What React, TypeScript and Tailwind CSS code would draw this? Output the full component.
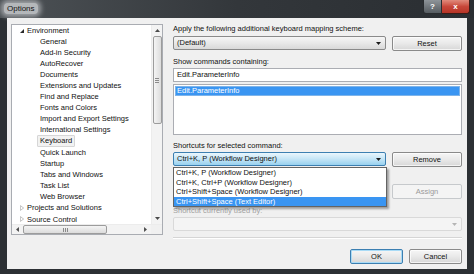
import React from 'react';

const treeItems: { label: string; level: 0 | 1; state?: 'open' | 'closed'; selected?: boolean }[] = [
  { label: 'Environment', level: 0, state: 'open' },
  { label: 'General', level: 1 },
  { label: 'Add-in Security', level: 1 },
  { label: 'AutoRecover', level: 1 },
  { label: 'Documents', level: 1 },
  { label: 'Extensions and Updates', level: 1 },
  { label: 'Find and Replace', level: 1 },
  { label: 'Fonts and Colors', level: 1 },
  { label: 'Import and Export Settings', level: 1 },
  { label: 'International Settings', level: 1 },
  { label: 'Keyboard', level: 1, selected: true },
  { label: 'Quick Launch', level: 1 },
  { label: 'Startup', level: 1 },
  { label: 'Tabs and Windows', level: 1 },
  { label: 'Task List', level: 1 },
  { label: 'Web Browser', level: 1 },
  { label: 'Projects and Solutions', level: 0, state: 'closed' },
  { label: 'Source Control', level: 0, state: 'closed' },
];

const shortcuts = [
  'Ctrl+K, P (Workflow Designer)',
  'Ctrl+K, Ctrl+P (Workflow Designer)',
  'Ctrl+Shift+Space (Workflow Designer)',
  'Ctrl+Shift+Space (Text Editor)',
];

const Arrow = ({ dir, className }: { dir: 'up' | 'down' | 'left' | 'right'; className?: string }) => {
  const pts = {
    up: '0,4 3.5,0 7,4',
    down: '0,0 7,0 3.5,4',
    left: '4,0 4,7 0,3.5',
    right: '0,0 0,7 4,3.5',
  }[dir];
  const vb = dir === 'up' || dir === 'down' ? '0 0 7 4' : '0 0 4 7';
  return (
    <svg viewBox={vb} className={className}>
      <polygon points={pts} fill="currentColor" />
    </svg>
  );
};

const Button = ({ label, kind = 'normal' }: { label: string; kind?: 'normal' | 'disabled' | 'default' }) => {
  if (kind === 'disabled') {
    return (
      <div className="flex h-[15px] w-[70px] items-center justify-center rounded-[2px] border border-[#c6c9cc] bg-[#f4f4f4] text-[#9a9a9a]">
        {label}
      </div>
    );
  }
  return (
    <div
      className={`flex h-[15px] items-center justify-center rounded-[2px] border bg-gradient-to-b from-[#f6f6f6] via-[#e9e9e9] to-[#d7d7d7] ${
        kind === 'default'
          ? 'border-[#3c7fb1] shadow-[inset_0_0_0_1px_#a9dbf6]'
          : 'border-[#8a8a8a] shadow-[inset_0_0_0_1px_rgba(255,255,255,0.7)]'
      }`}
    >
      {label}
    </div>
  );
};

export default function App() {
  return (
    <div className="flex h-[274px] w-[474px] flex-col overflow-hidden bg-[#2c3034] font-['Liberation_Sans',Arial,sans-serif] text-[7.5px] text-[#111]">
      {/* Title bar */}
      <div className="flex h-[18px] shrink-0 items-start bg-gradient-to-r from-[#4d5256] via-[#33373b] to-[#2a2e32]">
        <div className="ml-[4px] mt-[3px] rounded-[4px] bg-[#b4b7ba] px-[3px] text-[8px] leading-[11px] text-[#111] shadow-[0_0_5px_3px_rgba(180,183,186,0.8)]">
          Options
        </div>
        <div className="ml-auto mr-[4px] flex h-[14px]">
          <div className="flex w-[19px] items-center justify-center rounded-bl-[3px] border border-t-0 border-[#2a2d30] bg-gradient-to-b from-[#8e9499] to-[#565c61] text-[8px] font-bold text-white">
            ?
          </div>
          <div className="flex w-[28px] items-center justify-center rounded-br-[3px] border border-l-0 border-t-0 border-[#3a1c18] bg-gradient-to-b from-[#e08a7c] via-[#c8473a] to-[#b63426] text-[8px] font-bold text-white">
            x
          </div>
        </div>
      </div>

      {/* Body */}
      <div className="mx-[7px] mb-[5px] flex flex-1 flex-col bg-[#f0f0f0] pl-[4px] pr-[5px] pt-[6px]">
        <div className="flex gap-[10px]">
          {/* Tree */}
          <div className="flex h-[211px] w-[152px] flex-col border border-[#a9acb2] bg-white">
            <div className="flex min-h-0 flex-1">
              <div className="flex-1 overflow-hidden">
                {treeItems.map((item) => (
                  <div key={item.label} className="flex h-[11.1px] items-center whitespace-nowrap">
                    {item.level === 0 ? (
                      <>
                        <span className="flex w-[15px] justify-end pr-[3px]">
                          {item.state === 'open' ? (
                            <svg viewBox="0 0 5 5" className="h-[4px] w-[4px]">
                              <polygon points="5,0 5,5 0,5" fill="#2a2a2a" />
                            </svg>
                          ) : (
                            <svg viewBox="0 0 5 7" className="h-[6px] w-[4px]">
                              <polygon points="0.5,0.5 0.5,6.5 4.5,3.5" fill="none" stroke="#a0a0a0" strokeWidth="0.8" />
                            </svg>
                          )}
                        </span>
                        <span>{item.label}</span>
                      </>
                    ) : (
                      <span
                        className={`ml-[25px] px-[2px] leading-[10px] ${
                          item.selected ? 'rounded-[1px] border border-[#d6d6d6] bg-[#f2f2f2]' : 'border border-transparent'
                        }`}
                      >
                        {item.label}
                      </span>
                    )}
                  </div>
                ))}
              </div>
              {/* vertical scrollbar */}
              <div className="flex w-[11px] flex-col items-center border-l border-[#ececec] bg-[#f3f3f3]">
                <div className="flex h-[11px] items-center justify-center">
                  <Arrow dir="up" className="h-[3px] w-[5px] text-[#4a4a4a]" />
                </div>
                <div className="flex h-[88px] w-[9px] items-center justify-center rounded-[2px] border border-[#9c9c9c] bg-gradient-to-r from-[#f4f4f4] to-[#dcdcdc]">
                  <div className="flex flex-col gap-[1px]">
                    <div className="h-px w-[4px] bg-[#8a8a8a]" />
                    <div className="h-px w-[4px] bg-[#8a8a8a]" />
                    <div className="h-px w-[4px] bg-[#8a8a8a]" />
                  </div>
                </div>
                <div className="flex-1" />
                <div className="flex h-[11px] items-center justify-center">
                  <Arrow dir="down" className="h-[3px] w-[5px] text-[#4a4a4a]" />
                </div>
              </div>
            </div>
            {/* horizontal scrollbar */}
            <div className="flex h-[10px] items-center border-t border-[#ececec] bg-[#f3f3f3]">
              <div className="flex w-[11px] items-center justify-center">
                <Arrow dir="left" className="h-[5px] w-[3px] text-[#4a4a4a]" />
              </div>
              <div className="flex h-[9px] w-[84px] items-center justify-center rounded-[2px] border border-[#9c9c9c] bg-gradient-to-b from-[#f4f4f4] to-[#dcdcdc]">
                <div className="flex gap-[1px]">
                  <div className="h-[4px] w-px bg-[#8a8a8a]" />
                  <div className="h-[4px] w-px bg-[#8a8a8a]" />
                  <div className="h-[4px] w-px bg-[#8a8a8a]" />
                </div>
              </div>
              <div className="flex-1" />
              <div className="flex w-[11px] items-center justify-center">
                <Arrow dir="right" className="h-[5px] w-[3px] text-[#4a4a4a]" />
              </div>
              <div className="h-full w-[11px] bg-[#f0f0f0]" />
            </div>
          </div>

          {/* Right panel */}
          <div className="flex w-[289px] flex-col">
            <div className="h-[10px] leading-[10px]">Apply the following additional keyboard mapping scheme:</div>
            <div className="mt-[2px] flex gap-[6px]">
              <div className="flex h-[14px] flex-1 items-center rounded-[2px] border border-[#8a8a8a] bg-gradient-to-b from-[#f6f6f6] via-[#e9e9e9] to-[#d9d9d9] pl-[3px] pr-[4px]">
                <span className="flex-1">(Default)</span>
                <Arrow dir="down" className="h-[3px] w-[5px] text-[#1a1a1a]" />
              </div>
              <div className="w-[70px]">
                <Button label="Reset" />
              </div>
            </div>

            <div className="mt-[6px] h-[10px] leading-[10px]">Show commands containing:</div>
            <div className="mt-px flex h-[14px] items-center border border-[#abadb3] bg-white pl-[3px]">Edit.ParameterInfo</div>
            <div className="mt-[2px] h-[51px] border border-[#abadb3] bg-white p-px">
              <div className="flex h-[10px] items-center border border-[#7eb4ea] bg-[#3a95f2] pl-[1px] text-white">
                Edit.ParameterInfo
              </div>
            </div>

            <div className="mt-[6px] h-[10px] leading-[10px]">Shortcuts for selected command:</div>
            <div className="relative mt-px flex gap-[6px]">
              <div className="flex h-[14px] flex-1 items-center rounded-[2px] border border-[#3c7fb1] bg-gradient-to-b from-[#eaf6fd] via-[#c4e5f6] to-[#98d1ef] pl-[3px] pr-[4px]">
                <span className="flex-1">Ctrl+K, P (Workflow Designer)</span>
                <Arrow dir="down" className="h-[3px] w-[5px] text-[#1a1a1a]" />
              </div>
              <div className="w-[70px]">
                <Button label="Remove" />
              </div>
              {/* open drop-down list */}
              <div className="absolute left-0 top-[15px] z-10 w-[214px] border border-[#646464] bg-white shadow-[2px_2px_2px_rgba(0,0,0,0.35)]">
                {shortcuts.map((s, i) => (
                  <div
                    key={s}
                    className={`flex h-[9.5px] items-center pl-[2px] ${i === 3 ? 'bg-[#3a95f2] text-white' : ''}`}
                  >
                    {s}
                  </div>
                ))}
              </div>
            </div>

            <div className="mt-[17px] flex gap-[6px]">
              <div className="h-[15px] flex-1 border border-[#abadb3] bg-white" />
              <Button label="Assign" kind="disabled" />
            </div>

            <div className="mt-[7px] h-[10px] leading-[10px] text-[#a3a3a3]">Shortcut currently used by:</div>
            <div className="mt-px flex h-[14px] items-center justify-end rounded-[2px] border border-[#d9d9d9] bg-[#f4f4f4] pr-[4px]">
              <Arrow dir="down" className="h-[3px] w-[5px] text-[#b5b5b5]" />
            </div>

            <div className="mt-[6px] h-px bg-[#d5d5d5]" />
            <div className="h-px bg-white" />
          </div>
        </div>

        {/* Bottom buttons */}
        <div className="mt-[10px] flex justify-end gap-[6px]">
          <div className="w-[53px]">
            <Button label="OK" kind="default" />
          </div>
          <div className="w-[53px]">
            <Button label="Cancel" />
          </div>
        </div>
      </div>
    </div>
  );
}
